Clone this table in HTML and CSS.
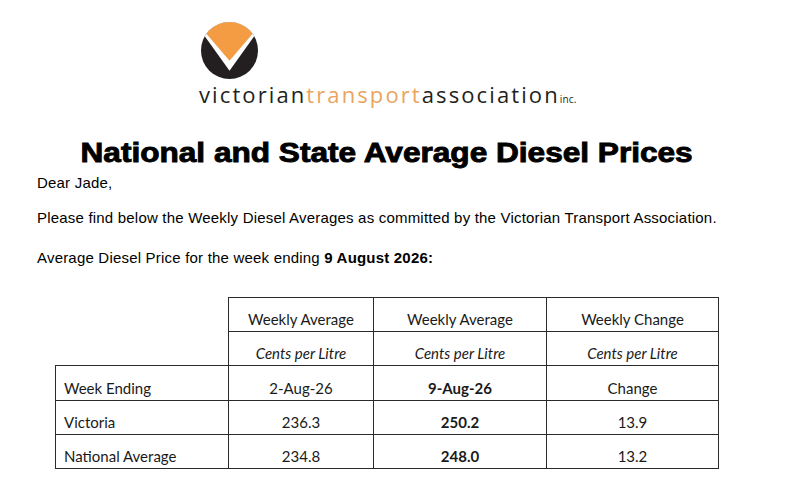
FILE: index.html
```html
<!DOCTYPE html>
<html lang="en">
<head>
<meta charset="utf-8">
<title>National and State Average Diesel Prices</title>
<link rel="stylesheet" href="styles.css">
</head>
<body>
<div class="page">
  <header class="brand">
    <svg class="brand-mark" viewBox="0 0 56 56" width="57" height="57" aria-hidden="true">
      <defs>
        <clipPath id="disc"><circle cx="28" cy="28" r="28"/></clipPath>
      </defs>
      <g clip-path="url(#disc)">
        <rect x="0" y="0" width="56" height="56" fill="#231f20"/>
        <polygon points="0,-1 56,-1 56,8.8 28,48 0,8.8" fill="#ffffff"/>
        <polygon points="0,-1 56,-1 56,5.3 28,38 0,5.3" fill="#f39c43"/>
      </g>
    </svg>
    <div class="wordmark"><span>victorian</span><span class="orange">transport</span><span>association</span><span class="inc">inc.</span></div>
  </header>

  <h1 class="title"><span>National and State Average Diesel Prices</span></h1>

  <p class="greeting">Dear Jade,</p>
  <p class="intro">Please find below the Weekly Diesel Averages as committed by the Victorian Transport Association.</p>
  <p class="week">Average Diesel Price for the week ending <strong>9 August 2026:</strong></p>

  <table class="prices">
    <colgroup>
      <col class="c1"><col class="c2"><col class="c3"><col class="c4">
    </colgroup>
    <tr>
      <td class="blank"></td>
      <td>Weekly Average</td>
      <td>Weekly Average</td>
      <td>Weekly Change</td>
    </tr>
    <tr>
      <td class="blank"></td>
      <td><em>Cents per Litre</em></td>
      <td><em>Cents per Litre</em></td>
      <td><em>Cents per Litre</em></td>
    </tr>
    <tr>
      <td class="label">Week Ending</td>
      <td>2-Aug-26</td>
      <td><strong>9-Aug-26</strong></td>
      <td>Change</td>
    </tr>
    <tr>
      <td class="label">Victoria</td>
      <td>236.3</td>
      <td><strong>250.2</strong></td>
      <td>13.9</td>
    </tr>
    <tr>
      <td class="label">National Average</td>
      <td>234.8</td>
      <td><strong>248.0</strong></td>
      <td>13.2</td>
    </tr>
  </table>
</div>
</body>
</html>
```

FILE: styles.css
```css
html, body {
  margin: 0;
  padding: 0;
  background: #ffffff;
}

body {
  font-family: "Liberation Sans", Arial, sans-serif;
  color: #000000;
}

.page {
  width: 803px;
  padding: 0 0 0 37px;
  box-sizing: border-box;
}

.brand {
  margin-left: 164px;
  padding-top: 22px;
}

.brand-mark {
  display: block;
}

.wordmark {
  margin-top: 2px;
  margin-left: -2px;
  font-family: "Open Sans", Lato, sans-serif;
  font-size: 22px;
  line-height: 26px;
  letter-spacing: 2.1px;
  color: #231f20;
  white-space: nowrap;
}

.wordmark .orange {
  color: #e9a561;
}

.wordmark .inc {
  font-size: 10px;
  letter-spacing: 0.2px;
  margin-left: 0;
}

.title {
  margin: 25px 0 0 0;
  width: 700px;
  text-align: center;
  font-size: 27px;
  line-height: 32px;
  font-weight: bold;
}

.title span {
  display: inline-block;
  transform: scaleX(1.17);
  -webkit-text-stroke: 0.9px #000;
}

.greeting,
.intro,
.week {
  margin: 0;
  font-size: 15px;
  line-height: 17px;
  letter-spacing: 0.2px;
}

.greeting {
  margin-top: 5px;
}

.intro {
  margin-top: 18px;
}

.week {
  margin-top: 23px;
}

.prices {
  margin: 31px 0 0 18px;
  border-collapse: collapse;
  table-layout: fixed;
  width: 664px;
  font-family: Lato, "Open Sans", sans-serif;
  font-size: 15px;
  color: #1a1a1a;
}

.prices .c1 { width: 173px; }
.prices .c2 { width: 145px; }
.prices .c3 { width: 173px; }
.prices .c4 { width: 172px; }

.prices td {
  border: 1px solid #2a2a2a;
  height: 34.2px;
  padding: 0 0 3px 0;
  line-height: 18px;
  vertical-align: bottom;
  text-align: center;
  box-sizing: border-box;
}

.prices td.blank {
  border: none;
  border-right: 1px solid #2a2a2a;
}

.prices td.label {
  text-align: left;
  padding-left: 8px;
}

.prices strong {
  font-weight: bold;
}
```
